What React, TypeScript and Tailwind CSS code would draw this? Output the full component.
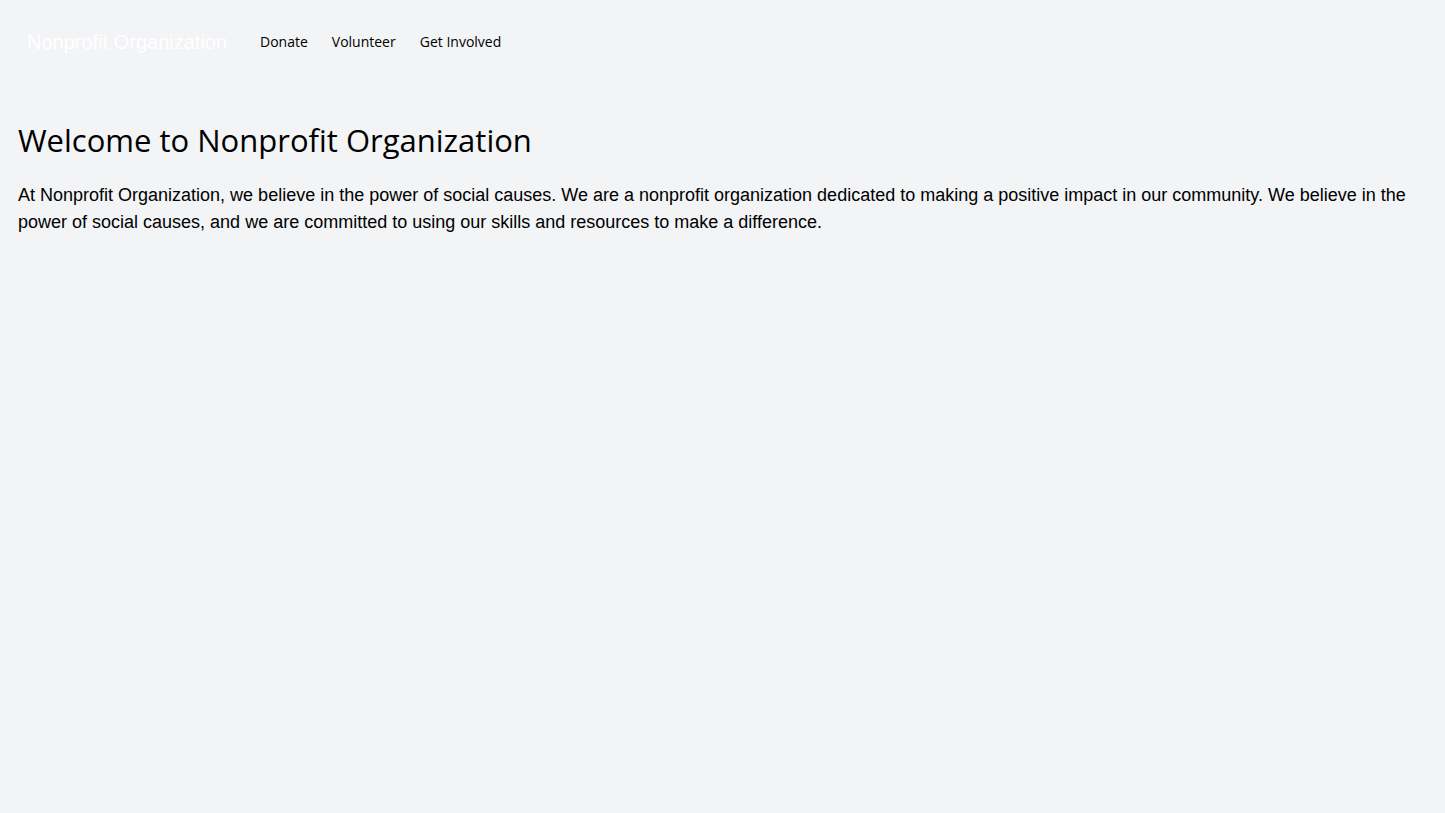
import React from 'react';

const App: React.FC = () => {
  const links = ['Donate', 'Volunteer', 'Get Involved'];

  return (
    <div className="min-h-screen bg-gray-100 text-black font-['Liberation_Sans',Arial,sans-serif]">
      {/* Nav */}
      <nav className="flex items-center px-[27px] pt-[28px] pb-[22px]">
        <span className="text-xl text-white w-[206px] mr-[27px]">Nonprofit Organization</span>
        <div className="flex items-center gap-6 text-sm font-['Open_Sans',sans-serif]">
          {links.map((link) => (
            <a key={link} href="#" className="text-black">
              {link}
            </a>
          ))}
        </div>
      </nav>

      {/* Intro */}
      <main className="px-[18px] pt-[44px]">
        <h1 className="text-[31px] leading-9 mb-6 font-['Open_Sans',sans-serif]">Welcome to Nonprofit Organization</h1>
        <p className="text-lg leading-normal">
          At Nonprofit Organization, we believe in the power of social causes. We are a nonprofit organization
          dedicated to making a positive impact in our community. We believe in the power of social causes, and we
          are committed to using our skills and resources to make a difference.
        </p>
      </main>
    </div>
  );
};

export default App;
